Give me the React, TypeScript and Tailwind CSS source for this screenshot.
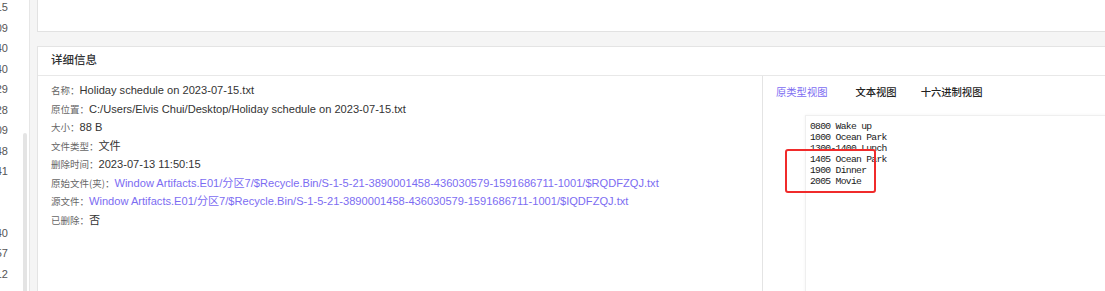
import React from "react"

const rowNums = ["15", "09", "40", "40", "29", "28", "09", "48", "41", "", "", "40", "57", "12"]

const details: { label: string; value: string; link?: boolean }[] = [
    { label: "名称：", value: "Holiday schedule on 2023-07-15.txt" },
    { label: "原位置：", value: "C:/Users/Elvis Chui/Desktop/Holiday schedule on 2023-07-15.txt" },
    { label: "大小：", value: "88 B" },
    { label: "文件类型：", value: "文件" },
    { label: "删除时间：", value: "2023-07-13 11:50:15" },
    { label: "原始文件(夹)：", value: "Window Artifacts.E01/分区7/$Recycle.Bin/S-1-5-21-3890001458-436030579-1591686711-1001/$RQDFZQJ.txt", link: true },
    { label: "源文件：", value: "Window Artifacts.E01/分区7/$Recycle.Bin/S-1-5-21-3890001458-436030579-1591686711-1001/$IQDFZQJ.txt", link: true },
    { label: "已删除：", value: "否" },
]

const codeLines = ["0800 Wake up", "1000 Ocean Park", "1300-1400 Lunch", "1405 Ocean Park", "1900 Dinner", "2005 Movie"]

export default function App() {
    return (
        <div className="w-[1105px] h-[291px] overflow-hidden flex bg-[#f5f5f5] font-['Liberation_Sans','Noto_Sans_CJK_SC',sans-serif]">
            {/* cut-off list on the left */}
            <div className="w-[30px] shrink-0 bg-white border-r border-[#e6e6e6] flex">
                <div className="w-[8px] shrink-0 flex flex-col mt-[-3px] overflow-hidden">
                    {rowNums.map((n, i) => (
                        <div key={i} className="h-[20.5px] shrink-0 flex justify-end items-center text-[11px] text-[#555]">
                            <span className="whitespace-nowrap">{n}</span>
                        </div>
                    ))}
                </div>
                <div className="w-[15px] shrink-0" />
                <div className="w-[4px] shrink-0 mt-[133px] bg-[#e4e4e4] rounded-t-full" />
            </div>

            <div className="flex-1 min-w-0 flex flex-col pl-[7px]">
                <div className="h-[32px] shrink-0 bg-white border-l border-b border-[#e2e2e2]" />

                <div className="mt-[14px] flex-1 flex flex-col bg-white border-l border-t border-[#e4e4e4]">
                    <div className="h-[29px] shrink-0 border-b border-[#e8e8e8] flex items-center pl-[13px] text-[11.5px] font-medium text-[#303133]">
                        详细信息
                    </div>

                    <div className="flex-1 flex">
                        <div className="w-[724px] shrink-0 pl-[13px] pt-[5px]">
                            {details.map(d => (
                                <div key={d.label} className="h-[18.5px] leading-[18.5px] flex items-baseline whitespace-nowrap">
                                    <span className="text-[9.5px] text-[#666] font-['Noto_Sans_CJK_SC',sans-serif]">{d.label}</span>
                                    <span className={`text-[11.1px] ${d.link ? "text-[#7c6cf2]" : "text-[#333]"}`}>{d.value}</span>
                                </div>
                            ))}
                        </div>

                        <div className="flex-1 relative border-l border-[#e4e4e4] pl-[13px] pt-[6px]">
                            <div className="h-[20px] flex items-center text-[10.3px] font-['Noto_Sans_CJK_SC',sans-serif] whitespace-nowrap">
                                <span className="text-[#7c6cf2]">原类型视图</span>
                                <span className="ml-[28px] text-[#222] font-medium">文本视图</span>
                                <span className="ml-[24px] text-[#222] font-medium">十六进制视图</span>
                            </div>
                            <div className="ml-[29px] mt-[13px] h-[200px] -mr-[4px] bg-white border border-[#efefef] shadow-[0_0_3px_rgba(0,0,0,0.05)] pl-[4px] pt-[5px]">
                                {codeLines.map(l => (
                                    <div key={l} className="leading-[11px] text-[9.7px] tracking-[-0.7px] text-[#1a1a1a] whitespace-pre font-['Liberation_Mono',monospace]">
                                        {l}
                                    </div>
                                ))}
                            </div>
                            <div className="absolute left-[22px] top-[73px] w-[91px] h-[44px] border-2 border-[#f02b2b] rounded-[3px]" />
                        </div>
                    </div>
                </div>
            </div>
        </div>
    )
}
